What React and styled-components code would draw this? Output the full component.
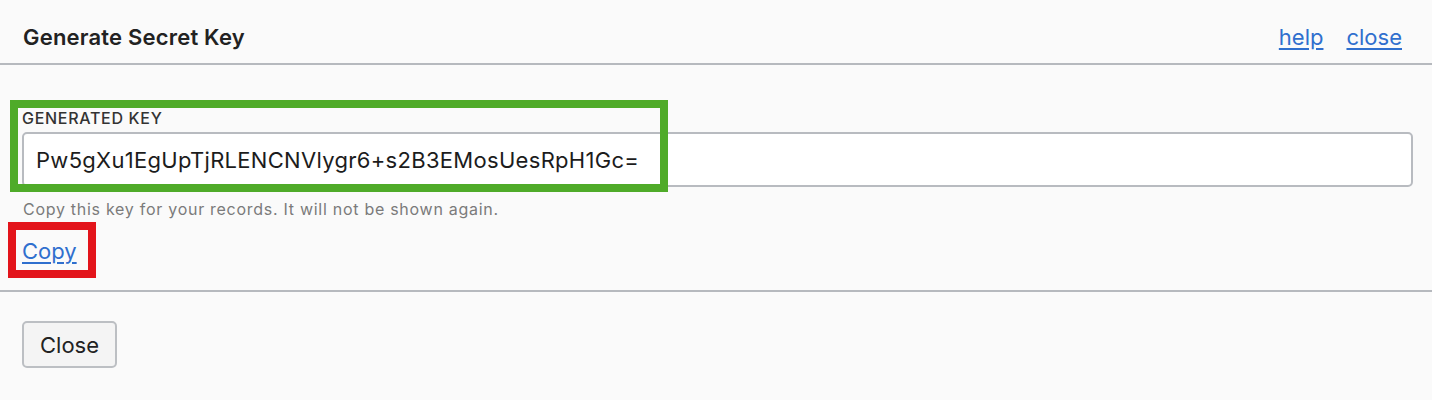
import React from "react"
import styled, { createGlobalStyle } from "styled-components"

const GlobalStyle = createGlobalStyle`
    html, body {
        margin:0;
        padding:0;
        background:#fafafa;
    }
    body {
        font-family:Inter, "Liberation Sans", Arial, sans-serif;
        color:#222;
    }
`

const Dialog = styled.div`
    width:1432px;
    height:400px;
    background:#fafafa;
    display:flex;
    flex-direction:column;
`

const Header = styled.div`
    height:65px;
    box-sizing:border-box;
    padding:23px 30px 0 23px;
    display:flex;
    justify-content:space-between;
    align-items:flex-start;
    border-bottom:2px solid #b6b9be;
`

const Title = styled.h1`
    margin:0;
    font-size:22px;
    line-height:28px;
    font-weight:600;
    letter-spacing:0.2px;
    color:#222;
`

const HeaderLinks = styled.div`
    display:flex;
    gap:23px;
    line-height:28px;
`

const Link = styled.a`
    color:#2f6fce;
    text-decoration:underline;
    text-underline-offset:3px;
    cursor:pointer;
    font-size:22px;
`

const Body = styled.div`
    position:relative;
    padding:45px 19px 0 22px;
    height:227px;
    box-sizing:border-box;
    border-bottom:2px solid #b6b9be;
`

const Label = styled.label`
    display:block;
    font-size:16px;
    line-height:17px;
    font-weight:500;
    color:#333;
    letter-spacing:0.7px;
    margin-bottom:5px;
`

const KeyInput = styled.input`
    display:block;
    width:100%;
    height:55px;
    box-sizing:border-box;
    border:2px solid #b8bbc0;
    border-radius:5px;
    background:#fff;
    padding:0 12px;
    font-family:Inter, "Liberation Sans", Arial, sans-serif;
    font-size:22px;
    letter-spacing:0.3px;
    color:#1c1c1c;
    outline:none;
`

const Hint = styled.p`
    margin:14px 0 0 1px;
    font-size:16px;
    line-height:17px;
    color:#7b7b7b;
    letter-spacing:0.72px;
`

const CopyRow = styled.div`
    margin-top:20px;
    line-height:26px;
`

const Marker = styled.div`
    position:absolute;
    border:8px solid ${p => p.color};
    box-sizing:border-box;
    pointer-events:none;
`

const Footer = styled.div`
    padding:29px 22px;
`

const Button = styled.button`
    width:95px;
    height:47px;
    box-sizing:border-box;
    border:2px solid #bcbfc3;
    border-radius:5px;
    background:#f4f4f4;
    font-family:Inter, "Liberation Sans", Arial, sans-serif;
    font-size:22px;
    color:#222;
    cursor:pointer;
`

export default function App() {
    return (
        <Dialog>
            <GlobalStyle />
            <Header>
                <Title>Generate Secret Key</Title>
                <HeaderLinks>
                    <Link>help</Link>
                    <Link>close</Link>
                </HeaderLinks>
            </Header>
            <Body>
                <Label>GENERATED KEY</Label>
                <KeyInput readOnly value="Pw5gXu1EgUpTjRLENCNVlygr6+s2B3EMosUesRpH1Gc=" />
                <Hint>Copy this key for your records. It will not be shown again.</Hint>
                <CopyRow>
                    <Link>Copy</Link>
                </CopyRow>
                <Marker color="#4fab29" style={{ left: 10, top: 35, width: 658, height: 92 }} />
                <Marker color="#e3141b" style={{ left: 8, top: 157, width: 88, height: 56 }} />
            </Body>
            <Footer>
                <Button>Close</Button>
            </Footer>
        </Dialog>
    )
}
